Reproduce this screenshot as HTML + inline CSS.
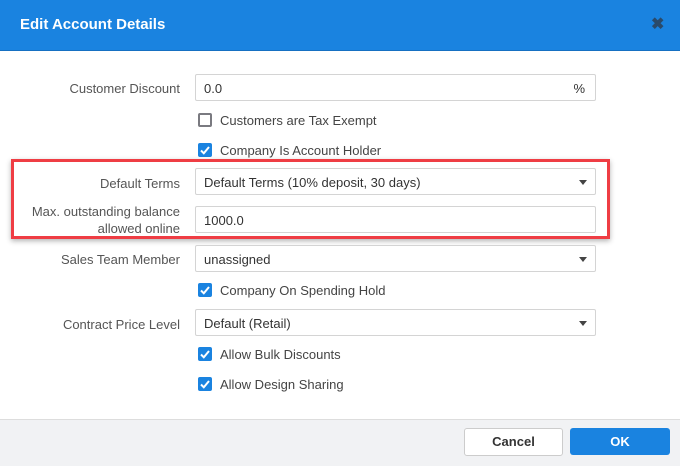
<!DOCTYPE html><html><head><style>
body{margin:0;width:680px;height:465px;position:relative;background:#fff;font-family:"Liberation Sans",Arial,sans-serif;font-size:13px;color:#444;overflow:hidden}
.hdr{position:absolute;left:0;top:0;width:680px;height:50px;background:#1a83e0;border-bottom:1px solid #1670c2}
.hdr .t{position:absolute;left:20px;top:16px;color:#fff;font-weight:bold;font-size:15px}
.hdr .x{position:absolute;left:651px;top:14px;color:#2a4a6a;font-weight:bold;font-size:16px}
.lbl{position:absolute;right:500px;text-align:right;color:#555;line-height:17px}
.inp{position:absolute;left:195px;width:399px;height:25px;border:1px solid #d4d4d4;border-radius:2px;box-sizing:content-box;background:#fff;color:#333}
.inp span{position:absolute;left:8px;top:6px}
.arr{position:absolute;right:8px;top:11px;width:0;height:0;border-left:4px solid transparent;border-right:4px solid transparent;border-top:5px solid #444}
.cb{position:absolute;left:198px;width:14px;height:14px;border-radius:2px;background:#1a83e0}
.cb.off{background:#fff;border:2px solid #7a7a80;width:10px;height:10px}
.cb svg{position:absolute;left:0;top:0}
.ct{position:absolute;left:220px;color:#444}
.red{position:absolute;left:11px;top:159px;width:593px;height:74px;border:3px solid #ef3d44;box-shadow:0 2px 5px rgba(0,0,0,.3)}
.ftr{position:absolute;left:0;top:419px;width:680px;height:46px;background:#f1f2f4;border-top:1px solid #ddd}
.btn{position:absolute;top:428px;width:98px;height:27px;border-radius:3px;text-align:center;line-height:27px;font-weight:bold;font-size:13px}
</style></head><body>
<div class="hdr"><div class="t">Edit Account Details</div><div class="x">✖</div></div>
<div class="lbl" style="top:80px">Customer Discount</div>
<div class="inp" style="top:74px"><span>0.0</span><span style="left:auto;right:10px">%</span></div>
<div class="cb off" style="top:113px"></div><div class="ct" style="top:113px">Customers are Tax Exempt</div>
<div class="cb" style="top:143px"><svg width="14" height="14"><path d="M3 7.5l2.8 2.8L11 4" stroke="#fff" stroke-width="2" fill="none"/></svg></div><div class="ct" style="top:143px">Company Is Account Holder</div>
<div class="red"></div>
<div class="lbl" style="top:175px">Default Terms</div>
<div class="inp" style="top:168px"><span>Default Terms (10% deposit, 30 days)</span><div class="arr"></div></div>
<div class="lbl" style="top:203px">Max. outstanding balance<br>allowed online</div>
<div class="inp" style="top:206px"><span>1000.0</span></div>
<div class="lbl" style="top:251px">Sales Team Member</div>
<div class="inp" style="top:245px"><span>unassigned</span><div class="arr"></div></div>
<div class="cb" style="top:283px"><svg width="14" height="14"><path d="M3 7.5l2.8 2.8L11 4" stroke="#fff" stroke-width="2" fill="none"/></svg></div><div class="ct" style="top:283px">Company On Spending Hold</div>
<div class="lbl" style="top:316px">Contract Price Level</div>
<div class="inp" style="top:309px"><span>Default (Retail)</span><div class="arr"></div></div>
<div class="cb" style="top:347px"><svg width="14" height="14"><path d="M3 7.5l2.8 2.8L11 4" stroke="#fff" stroke-width="2" fill="none"/></svg></div><div class="ct" style="top:347px">Allow Bulk Discounts</div>
<div class="cb" style="top:377px"><svg width="14" height="14"><path d="M3 7.5l2.8 2.8L11 4" stroke="#fff" stroke-width="2" fill="none"/></svg></div><div class="ct" style="top:377px">Allow Design Sharing</div>
<div class="ftr"></div>
<div class="btn" style="left:464px;background:#fff;border:1px solid #ccc;color:#333;width:97px;height:26px;line-height:26px">Cancel</div>
<div class="btn" style="left:570px;background:#1a83e0;color:#fff;width:100px">OK</div>
</body></html>
